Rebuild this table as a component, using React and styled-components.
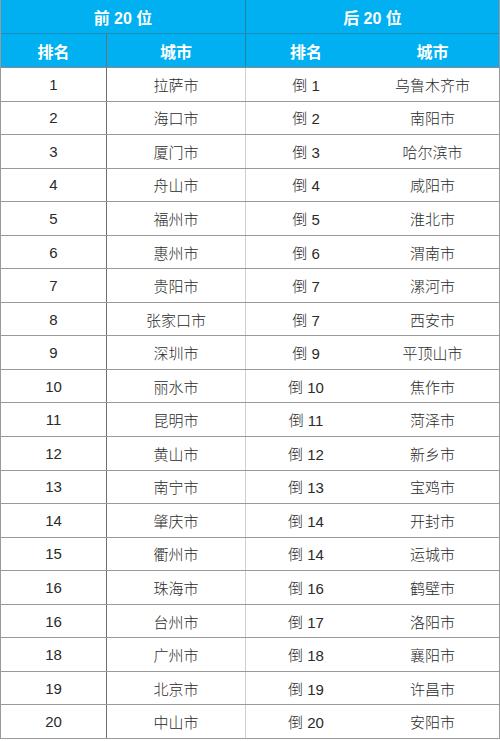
import styled, { createGlobalStyle } from "styled-components";

const top = [
  "拉萨市", "海口市", "厦门市", "舟山市", "福州市", "惠州市", "贵阳市", "张家口市", "深圳市", "丽水市",
  "昆明市", "黄山市", "南宁市", "肇庆市", "衢州市", "珠海市", "台州市", "广州市", "北京市", "中山市",
];
const topRank = [1, 2, 3, 4, 5, 6, 7, 8, 9, 10, 11, 12, 13, 14, 15, 16, 16, 18, 19, 20];

const bottom = [
  "乌鲁木齐市", "南阳市", "哈尔滨市", "咸阳市", "淮北市", "渭南市", "漯河市", "西安市", "平顶山市", "焦作市",
  "菏泽市", "新乡市", "宝鸡市", "开封市", "运城市", "鹤壁市", "洛阳市", "襄阳市", "许昌市", "安阳市",
];
const bottomRank = [1, 2, 3, 4, 5, 6, 7, 7, 9, 10, 11, 12, 13, 14, 14, 16, 17, 18, 19, 20];

const rows = top.map((city, i) => ({
  rank: topRank[i],
  city,
  lastRank: `倒 ${bottomRank[i]}`,
  lastCity: bottom[i],
}));

function App() {
  return (
    <>
      <GlobalStyle />
      <Table>
        <GroupRow>
          <GroupCell $divider>前 20 位</GroupCell>
          <GroupCell>后 20 位</GroupCell>
        </GroupRow>
        <HeadRow>
          <HeadCell $line="dark">排名</HeadCell>
          <HeadCell $line="blue">城市</HeadCell>
          <HeadCell>排名</HeadCell>
          <HeadCell>城市</HeadCell>
        </HeadRow>
        {rows.map((r, i) => (
          <BodyRow key={i}>
            <Cell $line="dark">{r.rank}</Cell>
            <Cell $line="light">{r.city}</Cell>
            <Cell>{r.lastRank}</Cell>
            <Cell>{r.lastCity}</Cell>
          </BodyRow>
        ))}
      </Table>
    </>
  );
}

/* ─── Styled Components ─── */

const GlobalStyle = createGlobalStyle`
  body {
    margin: 0;
    background: #fff;
    font-family: "Liberation Sans", Arial, "Noto Sans CJK SC", sans-serif;
  }
`;

const Table = styled.div`
  width: 500px;
  box-sizing: border-box;
  border-left: 1px solid #999;
  border-right: 1px solid #999;
  display: flex;
  flex-direction: column;
`;

const columns = "106px 139px 120px 133px";

const lineColor = {
  dark: "#6f6f6f",
  light: "#cfcfcf",
  blue: "#2b7ea3",
};

const GroupRow = styled.div`
  display: grid;
  grid-template-columns: 245px 253px;
  height: 34px;
  background: #00b0f0;
  border-bottom: 1px solid #1b8dbb;
  box-sizing: border-box;
`;

const GroupCell = styled.div`
  display: flex;
  align-items: center;
  justify-content: center;
  color: #fff;
  font-size: 16px;
  font-weight: 700;
  border-right: ${(p) => (p.$divider ? "1px solid #2b7ea3" : "none")};
`;

const HeadRow = styled.div`
  display: grid;
  grid-template-columns: ${columns};
  height: 34px;
  background: #00b0f0;
  border-bottom: 1px solid #8a8a8a;
  box-sizing: border-box;
`;

const HeadCell = styled.div`
  display: flex;
  align-items: center;
  justify-content: center;
  color: #fff;
  font-size: 16px;
  font-weight: 700;
  border-right: ${(p) => (p.$line ? `1px solid ${lineColor[p.$line]}` : "none")};
`;

const BodyRow = styled.div`
  display: grid;
  grid-template-columns: ${columns};
  height: 33.55px;
  border-bottom: 1px solid #9a9a9a;
  box-sizing: border-box;
`;

const Cell = styled.div`
  display: flex;
  align-items: center;
  justify-content: center;
  color: #2a2a2a;
  font-size: 15px;
  font-weight: 300;
  border-right: ${(p) => (p.$line ? `1px solid ${lineColor[p.$line]}` : "none")};
`;

export default App;
